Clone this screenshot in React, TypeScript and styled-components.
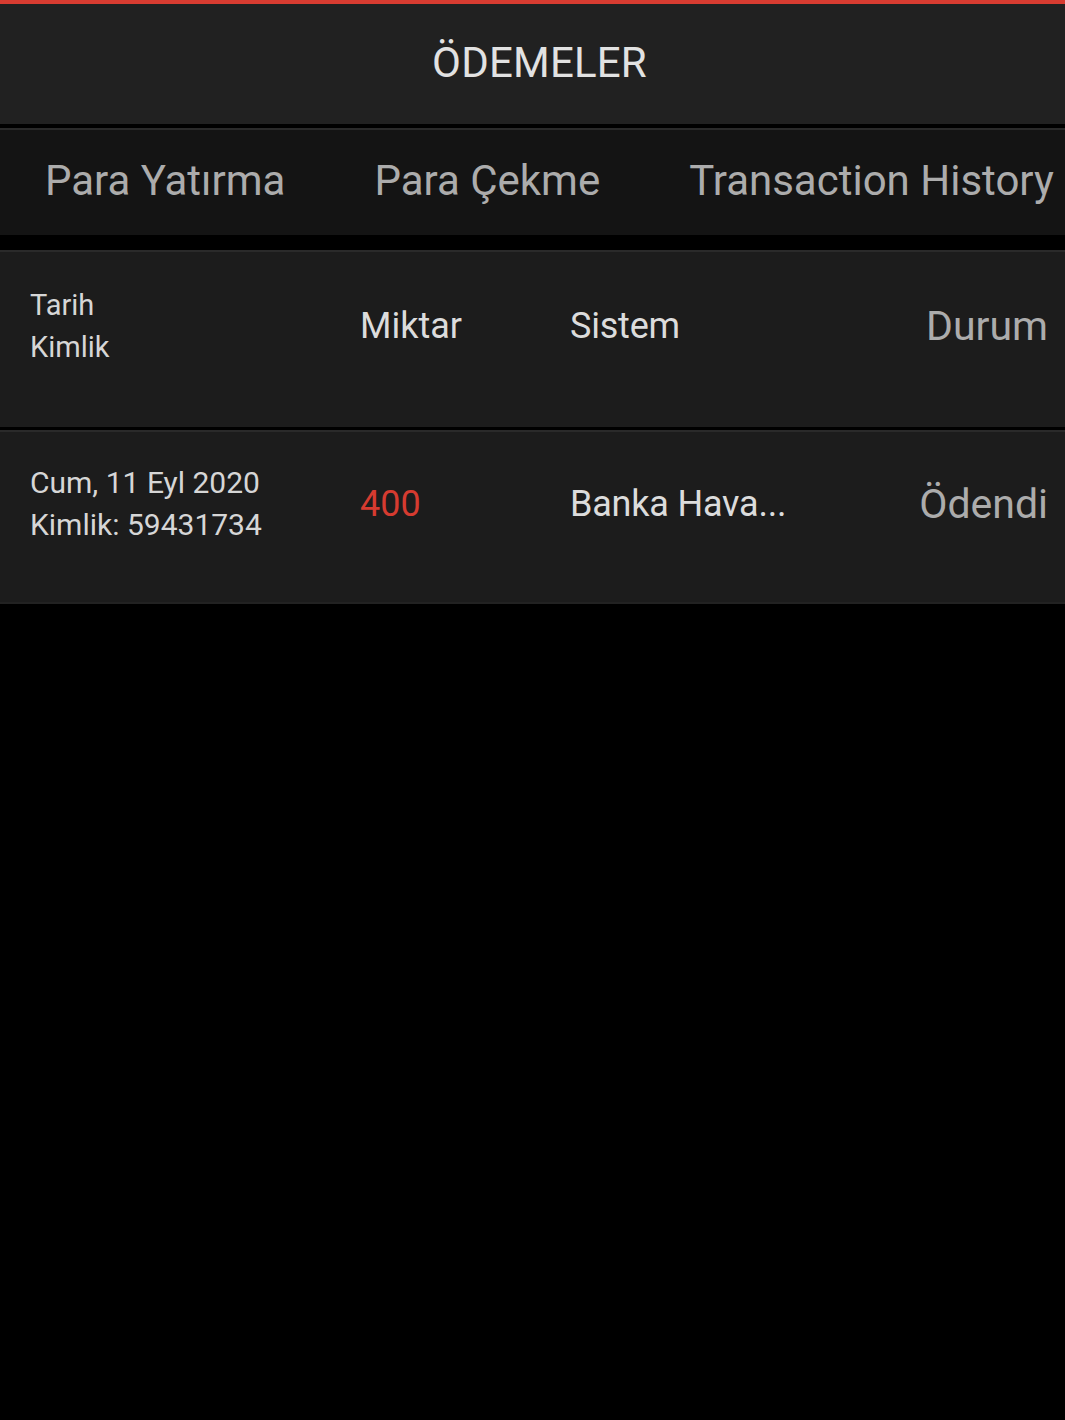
import styled, { createGlobalStyle } from 'styled-components';

const GlobalStyle = createGlobalStyle`
  html, body {
    margin: 0;
    padding: 0;
    background: #000;
    font-family: Roboto, "Noto Sans", sans-serif;
  }
  * { box-sizing: border-box; }
`;

interface Payment {
  date: string;
  id: string;
  amount: string;
  system: string;
  status: string;
}

const payments: Payment[] = [
  { date: 'Cum, 11 Eyl 2020', id: '59431734', amount: '400', system: 'Banka Hava...', status: 'Ödendi' },
];

const tabs = ['Para Yatırma', 'Para Çekme', 'Transaction History'];

export default function App() {
  return (
    <Page>
      <GlobalStyle />
      <Header>
        <h1>ÖDEMELER</h1>
      </Header>
      <TabBar>
        {tabs.map((t) => (
          <Tab key={t}>{t}</Tab>
        ))}
      </TabBar>
      <Table>
        <Row $head>
          <DateCell $head>
            <span>Tarih</span>
            <span>Kimlik</span>
          </DateCell>
          <AmountCell>Miktar</AmountCell>
          <SystemCell>Sistem</SystemCell>
          <StatusCell>Durum</StatusCell>
        </Row>
        {payments.map((p) => (
          <Row key={p.id}>
            <DateCell>
              <span>{p.date}</span>
              <span>Kimlik: {p.id}</span>
            </DateCell>
            <AmountCell $red>{p.amount}</AmountCell>
            <SystemCell>{p.system}</SystemCell>
            <StatusCell>{p.status}</StatusCell>
          </Row>
        ))}
      </Table>
    </Page>
  );
}

const Page = styled.div`
  min-height: 1420px;
  background: #000;
  border-top: 4px solid #d83c31;
`;

const Header = styled.header`
  height: 120px;
  background: #212121;
  display: flex;
  align-items: center;
  justify-content: center;
  padding: 0 0 4px 14px;

  h1 {
    margin: 0;
    font-size: 42px;
    font-weight: 400;
    color: #e2e2e2;
    letter-spacing: 0.2px;
  }
`;

const TabBar = styled.nav`
  margin-top: 4px;
  height: 107px;
  border-top: 2px solid #2a2a2a;
  background: #141414;
  display: flex;
  align-items: center;
  padding-bottom: 4px;
  overflow: hidden;
  white-space: nowrap;
`;

const Tab = styled.div`
  flex: none;
  padding: 0 44.5px;
  font-size: 42px;
  color: #acacac;
  line-height: 1;

  &:first-child {
    padding-left: 45px;
  }
`;

const Table = styled.section`
  margin-top: 15px;
  display: flex;
  flex-direction: column;
  gap: 3px;
`;

const Row = styled.div<{ $head?: boolean }>`
  height: ${(p) => (p.$head ? '177px' : '174px')};
  border-top: 2px solid #2a2a2a;
  border-bottom: ${(p) => (p.$head ? 'none' : '2px solid #222')};
  background: #1c1c1c;
  display: grid;
  grid-template-columns: 330px 210px 1fr auto;
  align-items: center;
  padding: 0 17px 27px 30px;
`;

const DateCell = styled.div<{ $head?: boolean }>`
  display: flex;
  flex-direction: column;
  font-size: ${(p) => (p.$head ? '29px' : '30px')};
  line-height: 42px;
  color: #d6d6d6;
`;

const AmountCell = styled.div<{ $red?: boolean }>`
  font-size: 36px;
  color: ${(p) => (p.$red ? '#d63b30' : '#dcdcdc')};
`;

const SystemCell = styled.div`
  font-size: 36px;
  color: #dcdcdc;
  white-space: nowrap;
  letter-spacing: -0.2px;
`;

const StatusCell = styled.div`
  font-size: 41px;
  color: #acacac;
  text-align: right;
`;
